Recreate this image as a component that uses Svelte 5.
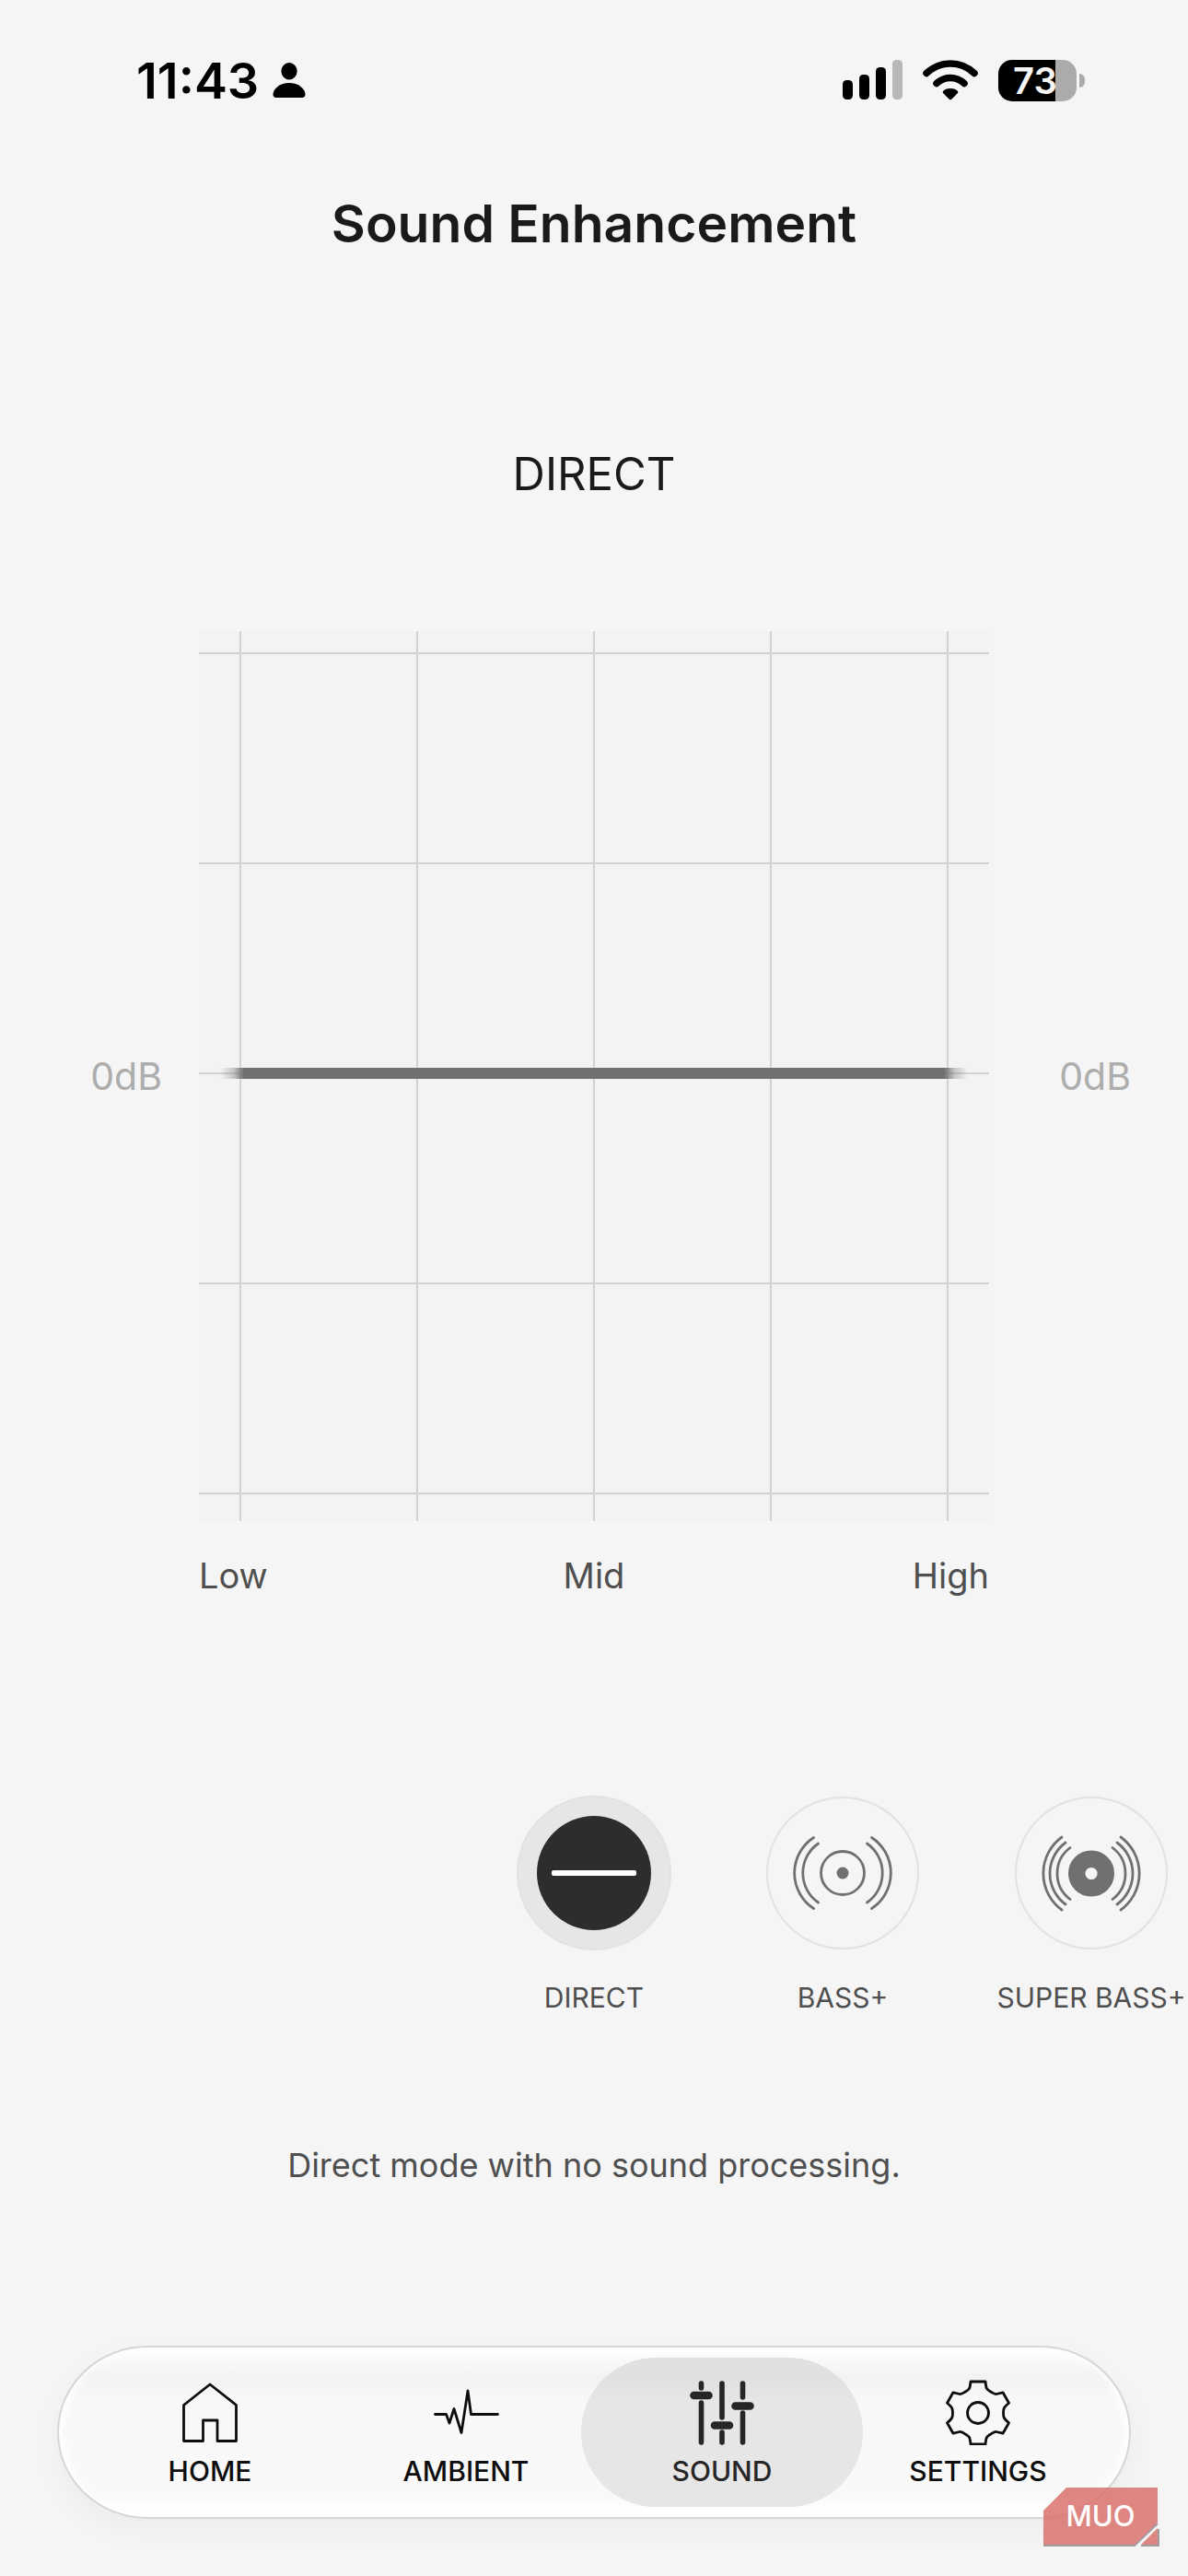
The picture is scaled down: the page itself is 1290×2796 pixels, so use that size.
<script>
  let modes = [
    { id: 'direct', label: 'DIRECT', description: 'Direct mode with no sound processing.' },
    { id: 'bass', label: 'BASS+', description: 'Boosts the low range.' },
    { id: 'super-bass', label: 'SUPER BASS+', description: 'Boosts the low range even more.' }
  ];
  let tabs = [
    { id: 'home', label: 'HOME' },
    { id: 'ambient', label: 'AMBIENT' },
    { id: 'sound', label: 'SOUND' },
    { id: 'settings', label: 'SETTINGS' }
  ];

  let selected = $state('direct');
  let current = $derived(modes.find((m) => m.id === selected));
</script>

<div class="screen">
  <header class="status-bar">
    <div class="status-time">
      <span>11:43</span>
      <svg width="36" height="38" viewBox="0 0 36 38" aria-hidden="true">
        <ellipse cx="18" cy="9.200" rx="8.600" ry="9.200" />
        <path d="M18 22c10 0 17.500 6.500 17.500 12.500 0 2-1.200 3.500-3.500 3.500H4C1.700 38 .5 36.500.5 34.500.5 28.500 8 22 18 22z" />
      </svg>
    </div>
    <div class="status-icons">
      <svg width="66" height="44" viewBox="0 0 66 44" aria-hidden="true">
        <rect x="1" y="22" width="11" height="21" rx="4.500" />
        <rect x="19" y="16" width="11" height="27" rx="4.500" />
        <rect x="37" y="8" width="11" height="35" rx="4.500" />
        <rect x="55" y="0" width="11" height="43" rx="4.500" fill="#b8b8b8" />
      </svg>
      <svg width="60" height="44" viewBox="0 0 60 44" aria-hidden="true">
        <path d="M4 14.500C19 .5 41 .5 56 14.500M15 25.500c9-8 21-8 30 0" fill="none" stroke="#000" stroke-width="7.500" stroke-linecap="round" />
        <path d="M30 31c4 0 6.500 1.200 7.800 2.700.8 1 .5 2-.3 2.800l-6 6c-1 1-2 1-3 0l-6-6c-.8-.8-1.100-1.800-.3-2.800C23.500 32.200 26 31 30 31z" />
      </svg>
      <div class="battery">
        <span class="battery-body"><span>73</span></span>
        <span class="battery-tip"></span>
      </div>
    </div>
  </header>

  <h1>Sound Enhancement</h1>

  <main>
    <h2>{current.label}</h2>

    <section class="equalizer" aria-label="Equalizer">
      <span class="level">0dB</span>
      <div class="graph">
        <svg viewBox="0 0 858 966" aria-hidden="true">
          <defs>
            <linearGradient id="fade" gradientUnits="userSpaceOnUse" x1="23" y1="0" x2="835" y2="0">
              <stop offset="0" stop-color="#707070" stop-opacity="0" />
              <stop offset="0.018" stop-color="#707070" stop-opacity="0.35" />
              <stop offset="0.032" stop-color="#707070" />
              <stop offset="0.968" stop-color="#707070" />
              <stop offset="0.982" stop-color="#707070" stop-opacity="0.35" />
              <stop offset="1" stop-color="#707070" stop-opacity="0" />
            </linearGradient>
          </defs>
          <rect width="858" height="966" fill="#f3f3f3" />
          {#each [24, 252, 480, 708, 936] as y}
            <path d="M0 {y}H858" stroke="#d2d2d2" stroke-width="2" />
          {/each}
          {#each [45, 237, 429, 621, 813] as x}
            <path d="M{x} 0V966" stroke="#d2d2d2" stroke-width="2" />
          {/each}
          <rect x="23" y="474" width="812" height="12" fill="url(#fade)" />
        </svg>
        <div class="ranges">
          <span>Low</span>
          <span>Mid</span>
          <span>High</span>
        </div>
      </div>
      <span class="level">0dB</span>
    </section>

    <section class="modes" aria-label="Sound modes">
      {#each modes as mode}
        <button class="mode" aria-pressed={selected === mode.id} onclick={() => (selected = mode.id)}>
          <span class="dial" class:active={selected === mode.id}>
            {#if mode.id === 'direct'}
              <svg width="124" height="124" viewBox="0 0 124 124" aria-hidden="true">
                <circle cx="62" cy="62" r="62" fill="#2d2d2d" />
                <rect x="16" y="59" width="92" height="6" rx="2" fill="#fff" />
              </svg>
            {:else if mode.id === 'bass'}
              <svg width="124" height="124" viewBox="0 0 124 124" fill="none" stroke="#707070" stroke-width="2.800" stroke-linecap="round" aria-hidden="true">
                <circle cx="62" cy="62" r="23.500" />
                <circle cx="62" cy="62" r="6.500" fill="#707070" stroke="none" />
                <path d="M35.500 30a39 39 0 0 0 0 64M30.500 23.500a46 46 0 0 0 0 77M88.500 30a39 39 0 0 1 0 64M93.500 23.500a46 46 0 0 1 0 77" />
              </svg>
            {:else}
              <svg width="124" height="124" viewBox="0 0 124 124" fill="none" stroke="#707070" stroke-width="2.800" stroke-linecap="round" aria-hidden="true">
                <circle cx="62" cy="62.500" r="15.800" stroke-width="18.400" />
                <path d="M39 34.500a35 35 0 0 0 0 56M34 29a41.500 41.500 0 0 0 0 67M30 23a48.800 48.800 0 0 0 0 79M85 34.500a35 35 0 0 1 0 56M90 29a41.500 41.500 0 0 1 0 67M94 23a48.800 48.800 0 0 1 0 79" />
              </svg>
            {/if}
          </span>
          <span class="mode-label">{mode.label}</span>
        </button>
      {/each}
    </section>

    <p class="description">{current.description}</p>
  </main>

  <footer>
    <nav>
      {#each tabs as tab}
        <a href="#{tab.id}" class:active={tab.id === 'sound'}>
          <svg width="72" height="72" viewBox="0 0 72 72" fill="none" stroke="currentColor" stroke-width="2.800" stroke-linejoin="round" stroke-linecap="round" aria-hidden="true">
            {#if tab.id === 'home'}
              <path d="M36 6 64.500 28.500V67.500H44V45H28.500V67.500H7.500V28.500z" />
            {:else if tab.id === 'ambient'}
              <path d="M2.500 38.500H14.500L18 48 23 32.500 31 58.500 38 13 41.500 38.500H70.500" />
            {:else if tab.id === 'sound'}
              <path d="M13.500 5v5M13.500 26v43M36 5v37M36 58v11M58.500 5v15M58.500 37v32" stroke-width="5.600" />
              <path d="M5.500 18h16M28 50.500h16M50.500 29.500h16" stroke-width="8.600" />
            {:else}
              <path d="M28 3H44C45 12 45.500 11 49 13.500C53 16 54 17 56 16.500L63 14.800 69.500 26.300C64 31 63.500 32 63.500 37S64 43 69.500 47.700L63 59.200 56 57.500C54 57 53 58 49 60.500C45.500 63 45 62 44 71H28C27 62 26.500 63 23 60.500C19 58 18 57 16 57.500L9 59.200 2.500 47.700C8 43 8.500 42 8.500 37S8 31 2.500 26.300L9 14.800 16 16.500C18 17 19 16 23 13.500C26.500 11 27 12 28 3z" />
              <circle cx="36" cy="37" r="11.500" />
            {/if}
          </svg>
          <span>{tab.label}</span>
        </a>
      {/each}
    </nav>
    <svg class="badge" width="126" height="66" viewBox="0 0 126 66" role="img" aria-label="MUO">
      <path d="M0 63H99L124 39M106 63H125V45" fill="none" stroke="#000" stroke-opacity=".35" stroke-width="2" />
      <path d="M25 0H124V38L99 62H0V25z" fill="#d9706a" fill-opacity=".84" />
      <path d="M124 44V62H106z" fill="#d9706a" fill-opacity=".84" />
      <text x="62" y="42" text-anchor="middle">MUO</text>
    </svg>
  </footer>
</div>

<style>
  :global(body) {
    background: #f5f5f5;
  }

  .screen {
    display: flex;
    flex-direction: column;
    min-height: 100vh;
    overflow: hidden;
    color: #1a1a1a;
    font-family: Inter, 'Liberation Sans', sans-serif;
  }

  .status-bar {
    display: flex;
    justify-content: space-between;
    align-items: center;
    height: 48px;
    padding: 63px 112px 0 148px;
    color: #000;
  }

  .status-time,
  .status-icons,
  .battery {
    display: flex;
    align-items: center;
  }

  .status-time {
    gap: 15px;
    font-size: 54px;
    font-weight: 600;
  }

  .status-icons {
    gap: 22px;
  }

  .battery {
    gap: 3px;
  }

  .battery-body {
    display: flex;
    align-items: center;
    box-sizing: border-box;
    width: 85px;
    height: 45px;
    padding-left: 16px;
    border-radius: 15px;
    background: linear-gradient(90deg, #000 73%, #ababab 73%);
    color: #f5f5f5;
    font-size: 40px;
    font-weight: 600;
  }

  .battery-tip {
    width: 6px;
    height: 15px;
    border-radius: 0 8px 8px 0;
    background: #ababab;
  }

  h1 {
    margin: 96px 0 0;
    font-size: 57px;
    font-weight: 600;
    line-height: 72px;
    text-align: center;
  }

  h2 {
    margin: 204px 0 0;
    font-size: 49px;
    font-weight: 400;
    line-height: 64px;
    text-align: center;
  }

  .equalizer {
    display: grid;
    grid-template-columns: 1fr 858px 1fr;
    margin-top: 138px;
  }

  .level {
    height: 966px;
    padding: 0 40px;
    color: #adadad;
    font-size: 41px;
    line-height: 966px;
    text-align: right;
  }

  .level:last-child {
    padding: 0 62px;
  }

  .graph svg {
    display: block;
    width: 100%;
  }

  .ranges {
    display: grid;
    grid-template-columns: 1fr 1fr 1fr;
    margin-top: 35px;
    color: #4f4f4f;
    font-size: 38px;
    line-height: 48px;
    text-align: center;
  }

  .ranges span:first-child {
    text-align: left;
  }

  .ranges span:last-child {
    text-align: right;
  }

  .modes {
    display: flex;
    margin-top: 215px;
    padding-left: calc(50% - 135px);
  }

  .mode {
    display: flex;
    flex: 0 0 270px;
    flex-direction: column;
    align-items: center;
    gap: 31px;
    padding: 0;
    border: 0;
    background: none;
    color: #4f4f4f;
    font: inherit;
    font-size: 30px;
    line-height: 40px;
    white-space: nowrap;
  }

  .dial {
    display: grid;
    place-items: center;
    box-sizing: border-box;
    width: 166px;
    height: 166px;
    margin: 1px;
    border: 2px solid #e2e2e2;
    border-radius: 50%;
  }

  .dial.active {
    width: 168px;
    height: 168px;
    margin: 0;
    background: #e6e6e6;
  }

  .description {
    margin: 138px 0 0;
    color: #4f4f4f;
    font-size: 36px;
    line-height: 48px;
    text-align: center;
  }

  footer {
    position: relative;
    margin-top: auto;
    padding: 0 62px 62px;
  }

  nav {
    display: grid;
    grid-template-columns: repeat(4, 1fr);
    box-sizing: border-box;
    height: 188px;
    padding: 11px 25px;
    border: 2px solid #d6d6d6;
    border-radius: 98px / 94px;
    background: linear-gradient(#fff 0, #f3f3f3 16%, #f3f3f3 20%, #f8f8f8 30%, #f9f9f9 88%, #fff 96%);
    box-shadow: 0 12px 32px rgba(0, 0, 0, 0.04), inset 8px 0 12px -4px #fff, inset -8px 0 12px -4px #fff;
  }

  nav a {
    display: flex;
    flex-direction: column;
    align-items: center;
    gap: 10px;
    margin: 0 -14px;
    padding-top: 23px;
    border-radius: 81px;
    color: #0d0d0d;
    font-size: 30px;
    font-weight: 500;
    line-height: 36px;
    text-decoration: none;
  }

  nav a.active {
    background: linear-gradient(#e0e0e0 0, #e1e1e1 15%, #e6e6e6 30%);
    color: #262626;
  }

  .badge {
    position: absolute;
    right: 31px;
    bottom: 30px;
  }

  .badge text {
    fill: #fff;
    font-size: 31px;
    font-weight: 500;
  }
</style>
